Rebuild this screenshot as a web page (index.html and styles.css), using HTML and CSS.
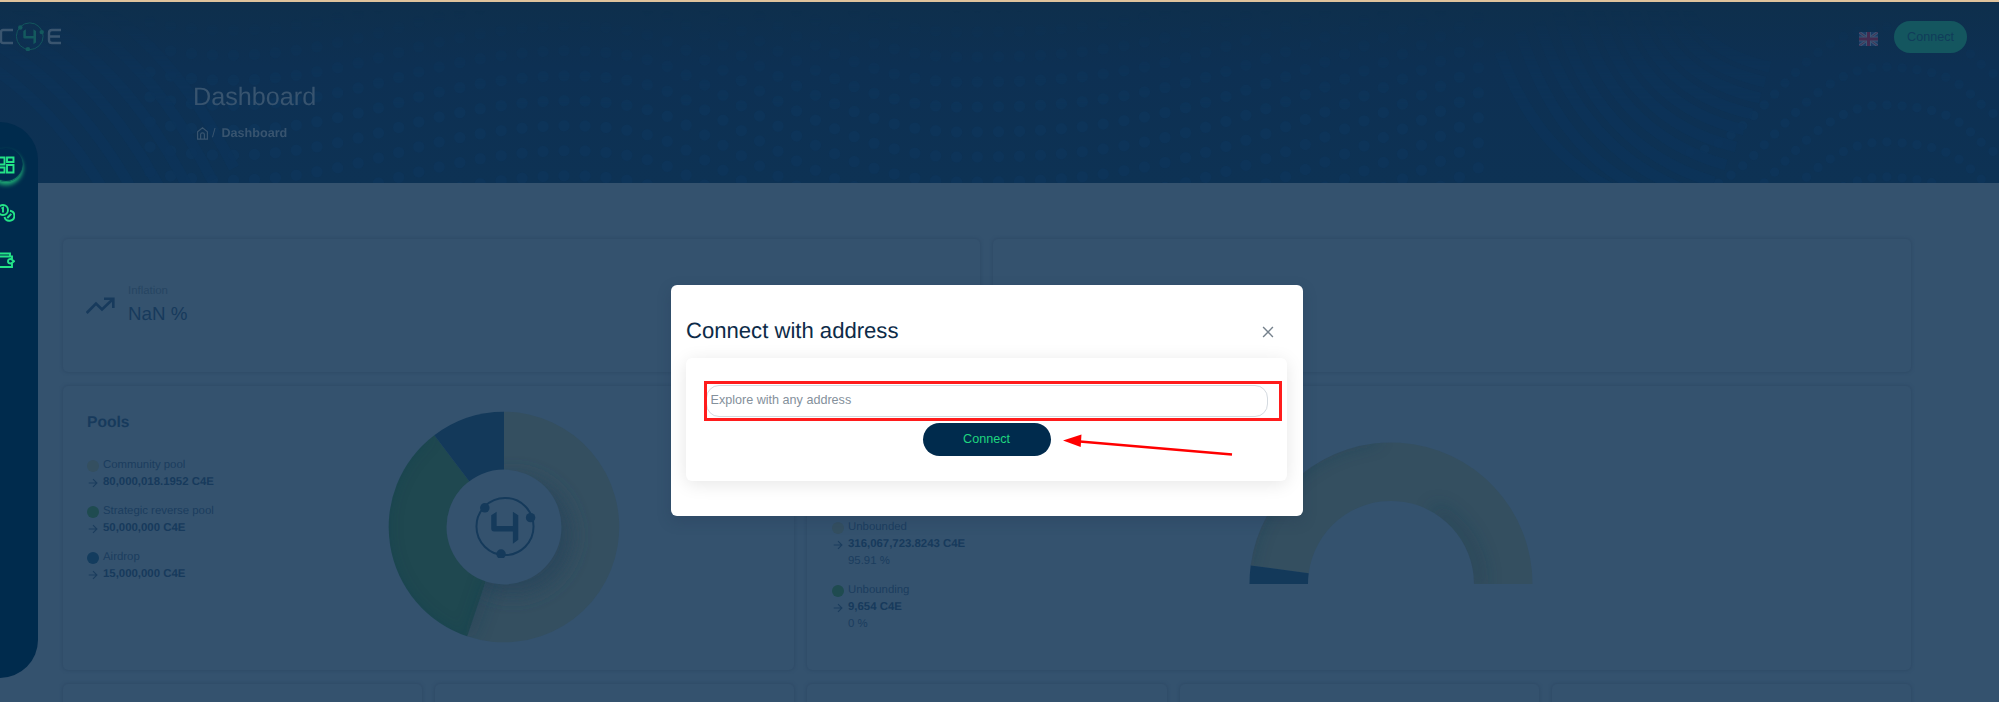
FILE: index.html
```html
<!DOCTYPE html>
<html lang="en">
<head>
<meta charset="utf-8">
<title>C4E Dashboard</title>
<link rel="stylesheet" href="styles.css">
</head>
<body>
<svg class="defs" width="0" height="0" aria-hidden="true">
  <symbol id="arrow" viewBox="0 0 10 10"><path d="M.8 5h8M5 1.2 8.9 5 5 8.8" fill="none" stroke="currentColor" stroke-width="1.1"/></symbol>
  <symbol id="four" viewBox="0 0 64 64">
    <circle cx="32" cy="32" r="29" fill="none" stroke="currentColor" stroke-width="2"/>
    <circle cx="11.5" cy="13" r="4.8" fill="currentColor"/><circle cx="58" cy="23" r="4.8" fill="currentColor"/><circle cx="28" cy="60" r="4.8" fill="currentColor"/>
    <path d="M18 20.500 23.500 17V31.500H40V17L45.500 20.500V45.500L40 49.500V37H21Q18 37 18 34Z" fill="currentColor"/>
  </symbol>
</svg>
<div class="page">
  <header class="header">
    <svg class="pattern" viewBox="0 0 1999 181" aria-hidden="true">
      <defs>
        <path id="wave" d="M150 45C240 65 330 45 400 25S600 -20 680 20S850 130 960 130S1200 130 1480 -10"/>
        <path id="crest" d="M1690 150C1760 145 1800 20 1890 25S1960 60 2010 80"/>
        <path id="swirl" d="M-20 -10C60 20 130 70 190 190"/>
      </defs>
      <g class="dots">
        <use href="#wave" y="-125"/><use href="#wave" y="-100"/><use href="#wave" y="-75"/><use href="#wave" y="-50"/><use href="#wave" y="-25"/><use href="#wave" y="0"/><use href="#wave" y="25"/><use href="#wave" y="50"/><use href="#wave" y="75"/><use href="#wave" y="100"/><use href="#wave" y="125"/><use href="#wave" y="150"/><use href="#wave" y="175"/>
      </g>
      <g class="dots dots-small">
        <use href="#crest" y="0"/><use href="#crest" y="40"/><use href="#crest" y="78"/><use href="#crest" y="115"/><use href="#crest" y="150"/>
      </g>
      <g class="rings">
        <use href="#swirl" x="0"/><use href="#swirl" x="-22" y="12"/><use href="#swirl" x="-44" y="24"/><use href="#swirl" x="-66" y="36"/><use href="#swirl" x="22" y="-12"/><use href="#swirl" x="44" y="-24"/>
        <path d="M1685 0Q1700 50 1770 65M1668 0Q1684 62 1765 80M1650 0Q1670 76 1760 96M1632 0Q1655 90 1752 112M1614 0Q1640 104 1744 128M1596 0Q1624 118 1736 145M1577 0Q1608 130 1726 163M1558 10Q1594 144 1714 180M1539 20Q1580 150 1690 190M1520 30Q1562 160 1660 195M1500 50Q1540 160 1630 195"/>
      </g>
    </svg>
    <div class="topbar">
      <svg class="logo" width="62" height="32" viewBox="0 0 62 32">
        <path class="logo-word" d="M13 9H3Q1 9 1 11V20Q1 22 3 22H13M61 9H52Q49 9 49 12V19Q49 22 52 22H61M49 15.500H60"/>
        <use class="logo-mark" href="#four" x="15" y="0.500" width="29.500" height="29.500"/>
      </svg>
      <div class="actions">
        <svg class="flag" width="19" height="14" viewBox="0 0 19 14">
          <rect width="19" height="14" fill="#1b3b66"/>
          <path d="M0 0 19 14M19 0 0 14" stroke="#3b5674" stroke-width="3"/><path d="M0 0 19 14M19 0 0 14" stroke="#432f55" stroke-width="1"/>
          <path d="M9.500 0V14M0 7H19" stroke="#3b5674" stroke-width="5"/><path d="M9.500 0V14M0 7H19" stroke="#432b50" stroke-width="3"/>
        </svg>
        <button class="connect-top">Connect</button>
      </div>
    </div>
    <h1 class="title">Dashboard</h1>
    <nav class="crumbs">
      <svg width="11" height="13" viewBox="0 0 11 13"><path d="M.6 4.800 5.500.8 10.400 4.800V12.200H.6ZM3.600 12V7.500Q3.600 5.800 5.500 5.800T7.400 7.500V12" fill="none" stroke="currentColor" stroke-width="1.200"/></svg>
      <span class="slash">/</span><b>Dashboard</b>
    </nav>
  </header>

  <main class="content">
    <section class="row row-top">
      <article class="card stat">
        <svg width="30" height="18" viewBox="0 0 30 18"><path d="M.7 16 10 6.500 16 12.500 26.500 2.500M18 1.800H27.300V11" fill="none" stroke="currentColor" stroke-width="2.600"/></svg>
        <div><div class="stat-label">Inflation</div><div class="stat-value">NaN %</div></div>
      </article>
      <article class="card"></article>
    </section>
    <section class="row row-mid">
      <article class="card pools">
        <div class="legend">
          <h2>Pools</h2>
          <div class="item"><i class="dot sand"></i><span>Community pool</span><svg><use href="#arrow"/></svg><b>80,000,018.1952 C4E</b></div>
          <div class="item"><i class="dot green"></i><span>Strategic reverse pool</span><svg><use href="#arrow"/></svg><b>50,000,000 C4E</b></div>
          <div class="item"><i class="dot blue"></i><span>Airdrop</span><svg><use href="#arrow"/></svg><b>15,000,000 C4E</b></div>
        </div>
        <svg class="donut" width="232" height="232" viewBox="-116 -116 232 232">
          <defs>
            <filter id="soft" x="-50%" y="-50%" width="200%" height="200%"><feGaussianBlur stdDeviation="9"/></filter>
            <clipPath id="sandClip"><path d="M0-115.300A115.300 115.300 0 1 1-36.800 109.300L0 0Z"/></clipPath>
            <clipPath id="greenClip"><path d="M-36.800 109.300A115.300 115.300 0 0 1-69.700-91.800L0 0Z"/></clipPath>
          </defs>
          <path class="f-sand" d="M0-115.300A115.300 115.300 0 1 1-36.800 109.300L0 0Z"/>
          <path class="f-green" d="M-36.800 109.300A115.300 115.300 0 0 1-69.700-91.800L0 0Z"/>
          <path class="f-blue" d="M-69.700-91.800A115.300 115.300 0 0 1 0-115.300V0Z"/>
          <g clip-path="url(#sandClip)"><circle class="shade" cx="9" cy="8" r="60" filter="url(#soft)"/><path class="shade-line" d="M-39 109 0 0" filter="url(#soft)"/></g>
          <g clip-path="url(#greenClip)"><path class="shade-line" d="M-31 112-10 50M-48 115A124 124 0 0 1-80-96" filter="url(#soft)"/></g>
          <circle class="hole" r="57.500"/>
          <use class="mark" href="#four" x="-30.500" y="-32" width="63" height="63"/>
        </svg>
      </article>
      <article class="card bonded">
        <div class="legend">
          <div class="item"><i class="dot sand"></i><span>Unbounded</span><svg><use href="#arrow"/></svg><b>316,067,723.8243 C4E</b><em>95.91 %</em></div>
          <div class="item"><i class="dot green"></i><span>Unbounding</span><svg><use href="#arrow"/></svg><b>9,654 C4E</b><em>0 %</em></div>
        </div>
        <svg class="gauge" width="284" height="142" viewBox="-142 -142 284 142">
          <defs><clipPath id="arcClip"><path d="M-140.300-18.500A141.500 141.500 0 0 1 141.500 0H83A83 83 0 0 0-82.300-10.800Z"/></clipPath></defs>
          <path class="f-sand" d="M-140.300-18.500A141.500 141.500 0 0 1 141.500 0H83A83 83 0 0 0-82.300-10.800Z"/>
          <g clip-path="url(#arcClip)"><path class="shade-line" d="M-148-15A148 148 0 0 1-15-148M87 5A84 84 0 0 0 43-74" filter="url(#soft)"/></g>
          <path class="f-blue" d="M-141.500 0A141.500 141.500 0 0 1-140.300-18.500L-82.300-10.800A83 83 0 0 0-83 0Z"/>
        </svg>
      </article>
    </section>
    <section class="row row-low">
      <article class="card"></article><article class="card"></article><article class="card"></article><article class="card"></article><article class="card"></article>
    </section>
  </main>

  <aside class="sidebar">
    <a class="nav active"><svg width="18" height="18" viewBox="0 0 18 18"><path d="M1.500 1.500H7.500V8.500H1.500ZM10 1.500H16.500V6H10ZM1.500 11.500H7.500V16.500H1.500ZM10 9H16.500V16.500H10Z"/></svg></a>
    <a class="nav"><svg width="18" height="18" viewBox="0 0 18 18"><circle cx="6" cy="6" r="5"/><path d="M4.500 4.500 6 3.800V8.500M13 6.800A5 5 0 1 1 7.500 13M10.300 14 14.300 9.800"/></svg></a>
    <a class="nav"><svg width="18" height="18" viewBox="0 0 18 18"><path d="M1 1.500H13V4.500M1 4.500H15V7M15 11.500V15H1V1.500M14 7 17 9.200 14 11.500Q11 11.500 11 9.200T14 7Z"/></svg></a>
  </aside>

  <div class="modal" role="dialog">
    <div class="modal-head">
      <h2>Connect with address</h2>
      <svg class="close" width="12" height="12" viewBox="0 0 11 11"><path d="M1 1 10 10M10 1 1 10"/></svg>
    </div>
    <form class="modal-body">
      <input type="text" placeholder="Explore with any address">
      <button type="button">Connect</button>
    </form>
  </div>
  <div class="highlight"></div>
  <svg class="pointer" width="172" height="26" viewBox="0 0 172 26"><path d="M14 8.300 169 21.500" stroke="#f00" stroke-width="2.500"/><path d="M0 7.500 18.500 1.500 17.700 14Z" fill="#f00"/></svg>
</div>
</body>
</html>
```
FILE: styles.css
```css
* { box-sizing: border-box; }
body { margin: 0; font-family: "Liberation Sans", Arial, sans-serif; background: #34526e; text-rendering: geometricPrecision; }
h1, h2 { margin: 0; font-weight: 400; }
button { border: 0; font: inherit; }
svg { display: block; flex: none; }
.defs { position: absolute; }
.page { position: relative; height: 702px; overflow: hidden; border-top: 2px solid #dfc39c; }

.header { position: relative; height: 181px; background: linear-gradient(#0e2f4c, #0d3053 36%, #0d3254); color: #38546f; }
.pattern { position: absolute; inset: 0; width: 1999px; height: 181px; -webkit-mask-image: linear-gradient(transparent 5%, #000 60%); mask-image: linear-gradient(transparent 5%, #000 60%); }
.dots { fill: none; stroke: #0d3459; stroke-width: 11.5; stroke-linecap: round; stroke-dasharray: 0 21; }
.dots-small { stroke-width: 9.5; stroke-dasharray: 0 15; }
.rings { fill: none; stroke: #0d3459; stroke-width: 11; opacity: .8; }
.topbar { position: relative; display: flex; justify-content: space-between; padding: 19px 32px 0 0; height: 80px; align-items: flex-start; }
.logo { margin-top: 0; }
.logo-word { fill: none; stroke: #3a556f; stroke-width: 2.4; }
.logo-mark { color: #14595e; }
.actions { display: flex; align-items: center; gap: 16px; }
.flag { margin-top: 3px; }
.connect-top { width: 73px; height: 32px; padding: 0 0 1px; border-radius: 16px; background: #14565f; color: #103c5a; font-size: 12.6px; }
.title { position: relative; margin-left: 193px; font-size: 25.2px; line-height: 30px; }
.crumbs { position: relative; display: flex; align-items: center; margin: 13px 0 0 197px; font-size: 12.6px; line-height: 16px; }
.slash { margin: 0 6px 0 4px; }

.content { display: flex; flex-direction: column; gap: 14px; padding: 56px 87px 0 63px; }
.row { display: grid; gap: 13px; width: 1848px; }
.row-top { grid-template-columns: 917px 1fr; height: 133px; }
.row-mid { grid-template-columns: 731px 1fr; height: 284px; }
.row-low { grid-template-columns: repeat(5, 1fr); height: 80px; }
.card { border-radius: 5px; color: #173a5c; box-shadow: 0 0 3px 1px #2f4b67; }
.stat { display: flex; gap: 12px; padding: 43px 23px; }
.stat > svg { margin-top: 15px; }
.stat-label { font-size: 11.4px; line-height: 16px; color: #264562; padding-top: 1px; }
.stat-value { font-size: 18.8px; line-height: 30px; }
.pools { display: flex; padding: 25px 24px; }
.legend { display: flex; flex-direction: column; gap: 12px; width: 301px; font-size: 11.4px; }
.legend h2 { font-size: 15.6px; font-weight: 700; line-height: 24px; margin: 0 0 10px; }
.item { display: grid; grid-template-columns: 12px auto; column-gap: 4px; line-height: 17px; align-items: center; justify-content: start; color: #1b3d5e; }
.item svg { width: 10px; height: 10px; margin-left: 1px; }
.item b { color: #173a5c; }
.item em { grid-column: 2; font-style: normal; }
.dot { width: 12px; height: 12px; border-radius: 50%; }
.sand { background: #344f60; }
.green { background: #1f4b50; }
.blue { background: #133c5e; }
.f-sand { fill: #344f60; }
.f-green { fill: #1f4850; }
.f-blue { fill: #13395a; }
.donut { margin: 0; }
.shade { fill: #2a465b; }
.shade-line { fill: none; stroke: #173b50; stroke-width: 10; opacity: .5; }
.hole { fill: #34526e; }
.mark { color: #153a5b; }
.bonded { display: flex; padding: 133px 25px 0; }
.bonded .legend { width: 417px; gap: 12px; }
.gauge { margin: -77px 0 0 0; }

.sidebar { position: absolute; left: -38px; top: 120px; width: 76px; height: 556px; border-radius: 38px; background: #002b4d; padding: 26px 0 0 27px; display: flex; flex-direction: column; gap: 14px; }
.nav { width: 34px; height: 34px; border-radius: 50%; display: flex; align-items: center; justify-content: center; }
.nav svg { margin: -1px 0 0 -1px; fill: none; stroke: #24e488; stroke-width: 1.9; }
.active { box-shadow: 0 3px 4px #1fae75, inset 0 -1px 1px #1a8c6c; }

.modal { position: absolute; left: 670.5px; top: 282.5px; width: 632.5px; height: 231px; border-radius: 6px; background: #fff; padding: 31px 16px 0 15.5px; box-shadow: 0 5px 14px rgba(30, 50, 80, .25); }
.modal-head { display: flex; align-items: center; justify-content: space-between; height: 30px; padding-right: 13.5px; }
.modal-head h2 { font-size: 22.1px; color: #0d2b48; }
.close { fill: none; stroke: #75818c; stroke-width: 1.3; margin-top: 2px; }
.modal-body { margin-top: 12px; height: 123px; border-radius: 6px; background: #fff; box-shadow: 0 3px 18px rgba(0, 0, 0, .1); padding: 27px 20px 0; display: flex; flex-direction: column; align-items: center; }
.modal-body input { width: 562px; height: 32px; border: 1px solid #d4dae0; border-radius: 13px; background: #fff; padding: 0 4px 2px; font: 12.6px "Liberation Sans", Arial, sans-serif; outline: 0; }
.modal-body input::placeholder { color: #84909b; opacity: 1; }
.modal-body button { margin-top: 6px; width: 128px; height: 33px; border-radius: 17px; background: #002b4d; color: #1fd67f; font-size: 12.6px; padding: 0 0 1px; }
.highlight { position: absolute; left: 704px; top: 379px; width: 578px; height: 40px; border: 2.5px solid #ff1c1c; outline: .5px solid #ff1c1c; outline-offset: -3px; }
.pointer { position: absolute; left: 1063px; top: 431px; }
```
